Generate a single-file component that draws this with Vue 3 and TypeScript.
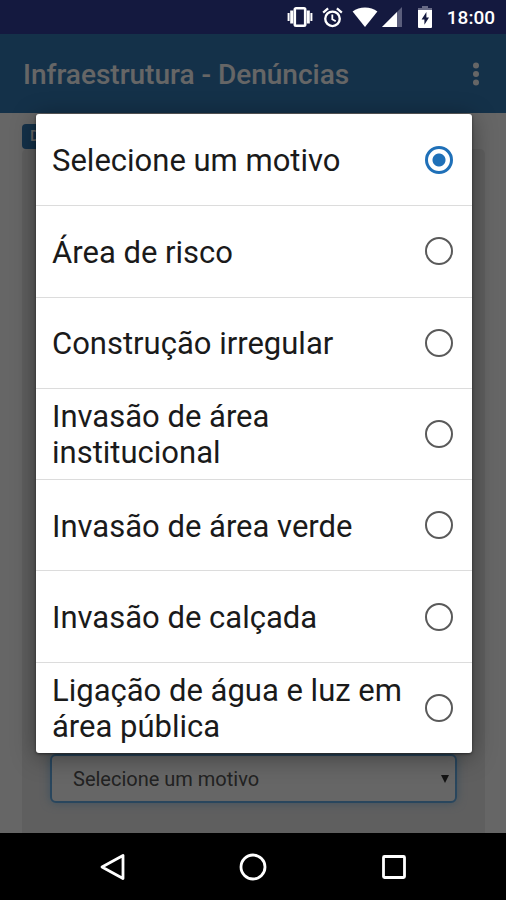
<script setup lang="ts">
import { ref } from 'vue'

const reasons: string[] = [
  'Selecione um motivo',
  'Área de risco',
  'Construção irregular',
  'Invasão de área institucional',
  'Invasão de área verde',
  'Invasão de calçada',
  'Ligação de água e luz em área pública',
]

const selected = ref<string>(reasons[0])
</script>

<template>
  <div class="screen">
    <div class="status-bar">
      <svg class="icon vibrate" viewBox="0 0 26 20" aria-hidden="true">
        <rect x="7.8" y="1.3" width="10.4" height="17.4" rx="1.2" fill="none" stroke="#fff" stroke-width="2.6" />
        <path d="M4.700 3.500v13M21.300 3.500v13" stroke="#fff" stroke-width="3" />
        <path d="M1.600 6v8M24.400 6v8" stroke="#fff" stroke-width="2" />
      </svg>
      <svg class="icon alarm" viewBox="0 0 22 22" aria-hidden="true">
        <circle cx="11" cy="12.4" r="7.6" fill="none" stroke="#fff" stroke-width="2.5" />
        <path d="M1.2 5.8 6.400 1.500M20.800 5.800 15.600 1.500" stroke="#fff" stroke-width="2.4" />
        <path d="M10.8 7.8v5l3.6 2.2" fill="none" stroke="#fff" stroke-width="1.9" />
      </svg>
      <svg class="icon wifi" viewBox="0 0 26 20" aria-hidden="true">
        <path d="M13 20 .6 4.6C4 1.800 8.300.4 13 .4s9 1.400 12.400 4.200z" fill="#fff" />
      </svg>
      <svg class="icon signal" viewBox="0 0 20 20" aria-hidden="true">
        <path d="M20 0v20H0z" fill="#5b5e7c" />
        <path d="M15 5V20H0z" fill="#fff" />
      </svg>
      <svg class="icon battery" viewBox="0 0 16 22" aria-hidden="true">
        <path d="M5 0h6v2h4v4H1V2h4z" fill="#686b86" />
        <path d="M1 4h14v17a1 1 0 0 1-1 1H2a1 1 0 0 1-1-1z" fill="#fff" />
        <path d="M9.400 6 4.600 13.400h2.800v5.400l4.600-7.200H9.400z" fill="#14193f" />
      </svg>
      <time class="clock">18:00</time>
    </div>

    <div class="app">
      <header class="app-bar">
        <h1>Infraestrutura - Denúncias</h1>
        <button class="more" type="button" aria-label="Menu">
          <svg viewBox="0 0 8 24" aria-hidden="true">
            <circle cx="4" cy="3.500" r="3" fill="#fff" />
            <circle cx="4" cy="12" r="3" fill="#fff" />
            <circle cx="4" cy="20.500" r="3" fill="#fff" />
          </svg>
        </button>
      </header>

      <main class="page">
        <span class="tag">D</span>
        <section class="card">
          <div class="select-wrap">
            <select v-model="selected" class="reason" aria-label="Motivo">
              <option v-for="reason in reasons" :key="reason" :value="reason">{{ reason }}</option>
            </select>
            <svg class="caret" viewBox="0 0 8 8" aria-hidden="true">
              <path d="M0 0h8L4 8z" fill="#333" />
            </svg>
          </div>
        </section>
      </main>

      <div class="scrim">
        <div class="dialog" role="dialog" aria-label="Motivo">
          <label v-for="reason in reasons" :key="reason" class="option">
            <span>{{ reason }}</span>
            <input v-model="selected" type="radio" name="reason" :value="reason" />
          </label>
        </div>
      </div>
    </div>

    <nav class="nav-bar">
      <button type="button" aria-label="Voltar">
        <svg viewBox="0 0 28 28" aria-hidden="true">
          <path d="M25 2.500v23L4 14z" fill="none" stroke="#fff" stroke-width="2.800" stroke-linejoin="round" />
        </svg>
      </button>
      <button type="button" aria-label="Início">
        <svg viewBox="0 0 28 28" aria-hidden="true">
          <circle cx="14" cy="14" r="12" fill="none" stroke="#fff" stroke-width="2.800" />
        </svg>
      </button>
      <button type="button" aria-label="Recentes">
        <svg viewBox="0 0 28 28" aria-hidden="true">
          <rect x="3.500" y="3.500" width="21" height="21" rx="1" fill="none" stroke="#fff" stroke-width="2.800" />
        </svg>
      </button>
    </nav>
  </div>
</template>

<style>
body {
  margin: 0;
}
</style>

<style scoped>
.screen {
  display: flex;
  flex-direction: column;
  min-height: 100vh;
  font-family: Roboto, "Liberation Sans", sans-serif;
}

button {
  display: flex;
  padding: 0;
  border: 0;
  background: none;
}

.status-bar {
  display: flex;
  align-items: center;
  justify-content: flex-end;
  height: 34px;
  padding-right: 11px;
  background: #14193f;
  color: #fff;
}

.icon {
  display: block;
}

.vibrate {
  width: 26px;
  height: 20px;
  margin-right: 9px;
}

.alarm {
  width: 21px;
  height: 21px;
  margin-right: 9px;
}

.wifi {
  width: 26px;
  height: 20px;
  margin-right: 4px;
}

.signal {
  width: 20px;
  height: 20px;
  margin-right: 15px;
}

.battery {
  width: 16px;
  height: 22px;
  margin-right: 14px;
}

.clock {
  padding-top: 2px;
  font-size: 19px;
  font-weight: 500;
  line-height: 32px;
}

.app {
  position: relative;
  display: flex;
  flex: 1;
  flex-direction: column;
}

.app-bar {
  display: flex;
  align-items: center;
  justify-content: space-between;
  height: 79px;
  padding: 0 26px 0 23px;
  background: #337ab7;
}

.app-bar h1 {
  margin: 0;
  padding-top: 2px;
  color: #fff;
  font-size: 28px;
  font-weight: 500;
  line-height: 36px;
}

.more svg {
  width: 8px;
  height: 24px;
}

.page {
  display: flex;
  flex: 1;
  flex-direction: column;
  padding: 11px 21px 0 22px;
  background: #fff;
}

.tag {
  box-sizing: border-box;
  width: 80px;
  padding-left: 8px;
  border-radius: 4px;
  background: #337ab7;
  color: #fff;
  font-size: 15px;
  font-weight: 500;
  line-height: 25px;
}

.card {
  display: flex;
  flex: 1;
  flex-direction: column;
  justify-content: flex-end;
  padding: 0 28px 30px;
  border-radius: 5px 5px 0 0;
  background: #ededed;
}

.select-wrap {
  position: relative;
}

.reason {
  display: block;
  width: 100%;
  height: 49px;
  padding: 0 21px;
  border: 2px solid #66afe9;
  border-radius: 6px;
  background: #fff;
  box-shadow: 0 0 10px rgba(102, 175, 233, 0.6);
  color: #555;
  font-family: inherit;
  font-size: 20px;
  appearance: none;
}

.caret {
  position: absolute;
  top: 21px;
  right: 8px;
  width: 8px;
  height: 8px;
}

.scrim {
  position: absolute;
  inset: 0;
  display: flex;
  padding: 80px 34px 80px 36px;
  background: rgba(0, 0, 0, 0.6);
}

.dialog {
  display: grid;
  flex: 1;
  grid-auto-rows: 1fr;
  border-radius: 3px;
  background: #fff;
  box-shadow: 0 4px 24px rgba(0, 0, 0, 0.4), 0 1px 3px rgba(0, 0, 0, 0.5);
}

.option {
  display: flex;
  align-items: center;
  justify-content: space-between;
  gap: 16px;
  padding: 0 19px 0 16px;
  color: #1a1a1a;
  font-size: 31px;
  line-height: 36px;
}

.option span {
  padding-top: 3px;
}

.option + .option {
  border-top: 1px solid #dcdcdc;
}

.option input {
  flex: none;
  width: 28px;
  height: 28px;
  margin: 0;
  border: 2px solid #5a5a5a;
  border-radius: 50%;
  background: #fff;
  appearance: none;
}

.option input:checked {
  border-width: 3px;
  border-color: #1f70b8;
  background: radial-gradient(circle, #1f70b8 6px, #fff 7px);
}

.nav-bar {
  display: flex;
  align-items: center;
  justify-content: center;
  gap: 113px;
  height: 67px;
  background: #000;
}

.nav-bar svg {
  width: 28px;
  height: 28px;
}
</style>
